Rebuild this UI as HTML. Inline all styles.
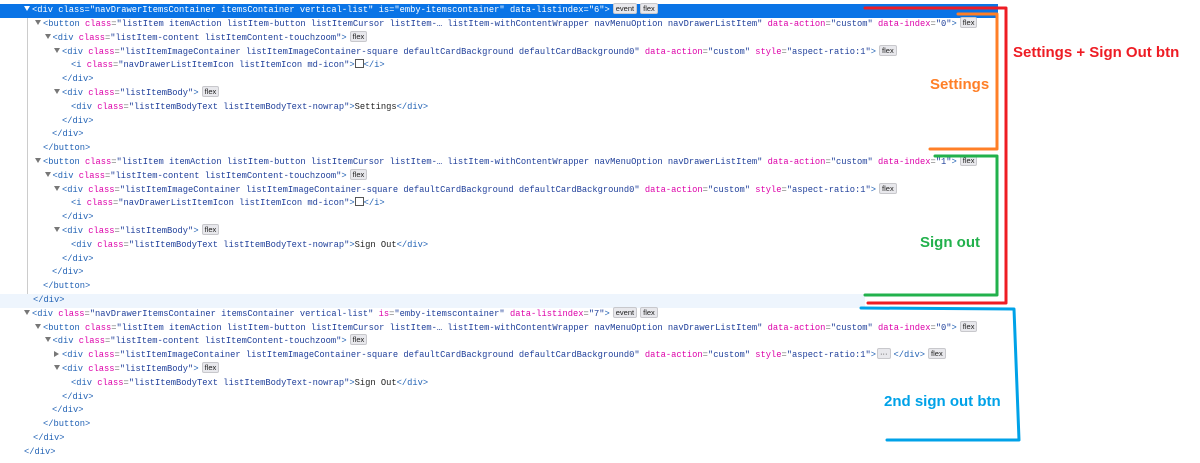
<!DOCTYPE html>
<html><head><meta charset="utf-8">
<style>
html,body{margin:0;padding:0;background:#fff;width:1200px;height:463px;overflow:hidden;position:relative}
.l{position:absolute;left:0;height:13.8px;line-height:13.8px;font-family:"Liberation Mono",monospace;font-size:8.75px;white-space:pre;color:#3c3c3c}
.t{color:#2363b5}
.a{color:#dd00a9}
.v{color:#1f3f9a}
.p{color:#777}
.x{color:#222}
.sel{background:#0a74e6;width:998px;left:0!important}
.sel *{color:#fff!important}
.hov{background:#eef5fd;width:865px;left:0!important}
.ar{display:inline-block;width:0;height:0;border-left:3.5px solid transparent;border-right:3.5px solid transparent;border-top:5px solid #777;vertical-align:middle;margin-right:2px;position:relative;top:-1px}
.ar.r{border-top:3.5px solid transparent;border-bottom:3.5px solid transparent;border-left:5px solid #777;border-right:0;margin-right:3px}
.sel .ar{border-top-color:#fff}
.b{display:inline-block;font-family:"Liberation Sans",sans-serif;font-size:7.5px;line-height:9px;padding:0 2px;background:#e8e8ec;border:1px solid #c8c8cc;border-radius:2px;color:#222!important;margin-left:3px;vertical-align:middle;position:relative;top:-1px}
.sq{display:inline-block;width:7px;height:7px;border:1px solid #555;vertical-align:middle;position:relative;top:-1px}
.g{position:absolute;left:27px;top:18px;width:1px;height:289px;background:#ccc}
.lab{position:absolute;font-family:"Liberation Sans",sans-serif;font-weight:bold;font-size:15px;white-space:nowrap}
</style></head><body>
<div class="g"></div>

<div class="l sel" style="top:4.1px;"><span style="padding-left:24px"></span><i class="ar"></i><span class="t">&lt;div </span><span class="a">class</span><span class="p">=</span><span class="v">"navDrawerItemsContainer itemsContainer vertical-list"</span> <span class="a">is</span><span class="p">=</span><span class="v">"emby-itemscontainer"</span> <span class="a">data-listindex</span><span class="p">=</span><span class="v">"6"</span><span class="t">&gt;</span><span class="b">event</span><span class="b">flex</span></div>

<div class="l" style="top:17.9px;left:35px"><i class="ar"></i><span class="t">&lt;button </span><span class="a">class</span><span class="p">=</span><span class="v">"listItem itemAction listItem-button listItemCursor listItem-… listItem-withContentWrapper navMenuOption navDrawerListItem"</span> <span class="a">data-action</span><span class="p">=</span><span class="v">"custom"</span> <span class="a">data-index</span><span class="p">=</span><span class="v">"0"</span><span class="t">&gt;</span><span class="b">flex</span></div>
<div class="l" style="top:31.7px;left:44.5px"><i class="ar"></i><span class="t">&lt;div </span><span class="a">class</span><span class="p">=</span><span class="v">"listItem-content listItemContent-touchzoom"</span><span class="t">&gt;</span><span class="b">flex</span></div>
<div class="l" style="top:45.5px;left:54px"><i class="ar"></i><span class="t">&lt;div </span><span class="a">class</span><span class="p">=</span><span class="v">"listItemImageContainer listItemImageContainer-square defaultCardBackground defaultCardBackground0"</span> <span class="a">data-action</span><span class="p">=</span><span class="v">"custom"</span> <span class="a">style</span><span class="p">=</span><span class="v">"aspect-ratio:1"</span><span class="t">&gt;</span><span class="b">flex</span></div>
<div class="l" style="top:59.3px;left:71px"><span class="t">&lt;i </span><span class="a">class</span><span class="p">=</span><span class="v">"navDrawerListItemIcon listItemIcon md-icon"</span><span class="t">&gt;</span><span class="sq"></span><span class="t">&lt;/i&gt;</span></div>
<div class="l" style="top:73.1px;left:62px"><span class="t">&lt;/div&gt;</span></div>
<div class="l" style="top:86.9px;left:54px"><i class="ar"></i><span class="t">&lt;div </span><span class="a">class</span><span class="p">=</span><span class="v">"listItemBody"</span><span class="t">&gt;</span><span class="b">flex</span></div>
<div class="l" style="top:100.7px;left:71px"><span class="t">&lt;div </span><span class="a">class</span><span class="p">=</span><span class="v">"listItemBodyText listItemBodyText-nowrap"</span><span class="t">&gt;</span><span class="x">Settings</span><span class="t">&lt;/div&gt;</span></div>
<div class="l" style="top:114.5px;left:62px"><span class="t">&lt;/div&gt;</span></div>
<div class="l" style="top:128.3px;left:52px"><span class="t">&lt;/div&gt;</span></div>
<div class="l" style="top:142.1px;left:43px"><span class="t">&lt;/button&gt;</span></div>

<div class="l" style="top:155.9px;left:35px"><i class="ar"></i><span class="t">&lt;button </span><span class="a">class</span><span class="p">=</span><span class="v">"listItem itemAction listItem-button listItemCursor listItem-… listItem-withContentWrapper navMenuOption navDrawerListItem"</span> <span class="a">data-action</span><span class="p">=</span><span class="v">"custom"</span> <span class="a">data-index</span><span class="p">=</span><span class="v">"1"</span><span class="t">&gt;</span><span class="b">flex</span></div>
<div class="l" style="top:169.7px;left:44.5px"><i class="ar"></i><span class="t">&lt;div </span><span class="a">class</span><span class="p">=</span><span class="v">"listItem-content listItemContent-touchzoom"</span><span class="t">&gt;</span><span class="b">flex</span></div>
<div class="l" style="top:183.5px;left:54px"><i class="ar"></i><span class="t">&lt;div </span><span class="a">class</span><span class="p">=</span><span class="v">"listItemImageContainer listItemImageContainer-square defaultCardBackground defaultCardBackground0"</span> <span class="a">data-action</span><span class="p">=</span><span class="v">"custom"</span> <span class="a">style</span><span class="p">=</span><span class="v">"aspect-ratio:1"</span><span class="t">&gt;</span><span class="b">flex</span></div>
<div class="l" style="top:197.3px;left:71px"><span class="t">&lt;i </span><span class="a">class</span><span class="p">=</span><span class="v">"navDrawerListItemIcon listItemIcon md-icon"</span><span class="t">&gt;</span><span class="sq"></span><span class="t">&lt;/i&gt;</span></div>
<div class="l" style="top:211.1px;left:62px"><span class="t">&lt;/div&gt;</span></div>
<div class="l" style="top:224.9px;left:54px"><i class="ar"></i><span class="t">&lt;div </span><span class="a">class</span><span class="p">=</span><span class="v">"listItemBody"</span><span class="t">&gt;</span><span class="b">flex</span></div>
<div class="l" style="top:238.7px;left:71px"><span class="t">&lt;div </span><span class="a">class</span><span class="p">=</span><span class="v">"listItemBodyText listItemBodyText-nowrap"</span><span class="t">&gt;</span><span class="x">Sign Out</span><span class="t">&lt;/div&gt;</span></div>
<div class="l" style="top:252.5px;left:62px"><span class="t">&lt;/div&gt;</span></div>
<div class="l" style="top:266.3px;left:52px"><span class="t">&lt;/div&gt;</span></div>
<div class="l" style="top:280.1px;left:43px"><span class="t">&lt;/button&gt;</span></div>
<div class="l hov" style="top:293.9px;"><span style="padding-left:33px"></span><span class="t">&lt;/div&gt;</span></div>

<div class="l" style="top:307.7px;left:24px"><i class="ar"></i><span class="t">&lt;div </span><span class="a">class</span><span class="p">=</span><span class="v">"navDrawerItemsContainer itemsContainer vertical-list"</span> <span class="a">is</span><span class="p">=</span><span class="v">"emby-itemscontainer"</span> <span class="a">data-listindex</span><span class="p">=</span><span class="v">"7"</span><span class="t">&gt;</span><span class="b">event</span><span class="b">flex</span></div>
<div class="l" style="top:321.5px;left:35px"><i class="ar"></i><span class="t">&lt;button </span><span class="a">class</span><span class="p">=</span><span class="v">"listItem itemAction listItem-button listItemCursor listItem-… listItem-withContentWrapper navMenuOption navDrawerListItem"</span> <span class="a">data-action</span><span class="p">=</span><span class="v">"custom"</span> <span class="a">data-index</span><span class="p">=</span><span class="v">"0"</span><span class="t">&gt;</span><span class="b">flex</span></div>
<div class="l" style="top:335.3px;left:44.5px"><i class="ar"></i><span class="t">&lt;div </span><span class="a">class</span><span class="p">=</span><span class="v">"listItem-content listItemContent-touchzoom"</span><span class="t">&gt;</span><span class="b">flex</span></div>
<div class="l" style="top:349.1px;left:54px"><i class="ar r"></i><span class="t">&lt;div </span><span class="a">class</span><span class="p">=</span><span class="v">"listItemImageContainer listItemImageContainer-square defaultCardBackground defaultCardBackground0"</span> <span class="a">data-action</span><span class="p">=</span><span class="v">"custom"</span> <span class="a">style</span><span class="p">=</span><span class="v">"aspect-ratio:1"</span><span class="t">&gt;</span><span class="b" style="margin-left:1px;margin-right:3px">···</span><span class="t">&lt;/div&gt;</span><span class="b">flex</span></div>
<div class="l" style="top:362.9px;left:54px"><i class="ar"></i><span class="t">&lt;div </span><span class="a">class</span><span class="p">=</span><span class="v">"listItemBody"</span><span class="t">&gt;</span><span class="b">flex</span></div>
<div class="l" style="top:376.7px;left:71px"><span class="t">&lt;div </span><span class="a">class</span><span class="p">=</span><span class="v">"listItemBodyText listItemBodyText-nowrap"</span><span class="t">&gt;</span><span class="x">Sign Out</span><span class="t">&lt;/div&gt;</span></div>
<div class="l" style="top:390.5px;left:62px"><span class="t">&lt;/div&gt;</span></div>
<div class="l" style="top:404.3px;left:52px"><span class="t">&lt;/div&gt;</span></div>
<div class="l" style="top:418.1px;left:43px"><span class="t">&lt;/button&gt;</span></div>
<div class="l" style="top:431.9px;left:33px"><span class="t">&lt;/div&gt;</span></div>
<div class="l" style="top:445.7px;left:24px"><span class="t">&lt;/div&gt;</span></div>

<svg width="1200" height="463" style="position:absolute;left:0;top:0" fill="none" stroke-linecap="round" stroke-linejoin="round">
<polyline points="865,8 1006,8 1006,303 868,303" stroke="#ee1c24" stroke-width="3"/>
<polyline points="958,14 997,14 997,149 930,149" stroke="#ff7f27" stroke-width="3"/>
<polyline points="935,156 997,156 997,295 865,295" stroke="#22b14c" stroke-width="3"/>
<polyline points="861,308 1014,309 1019,440 887,440" stroke="#00a2e8" stroke-width="3"/>
</svg>
<div class="lab" style="left:1013px;top:44px;color:#ee1c24">Settings + Sign Out btn</div>
<div class="lab" style="left:930px;top:76px;color:#ff7f27">Settings</div>
<div class="lab" style="left:920px;top:234px;color:#22b14c">Sign out</div>
<div class="lab" style="left:884px;top:393px;color:#00a2e8">2nd sign out btn</div>
</body></html>
